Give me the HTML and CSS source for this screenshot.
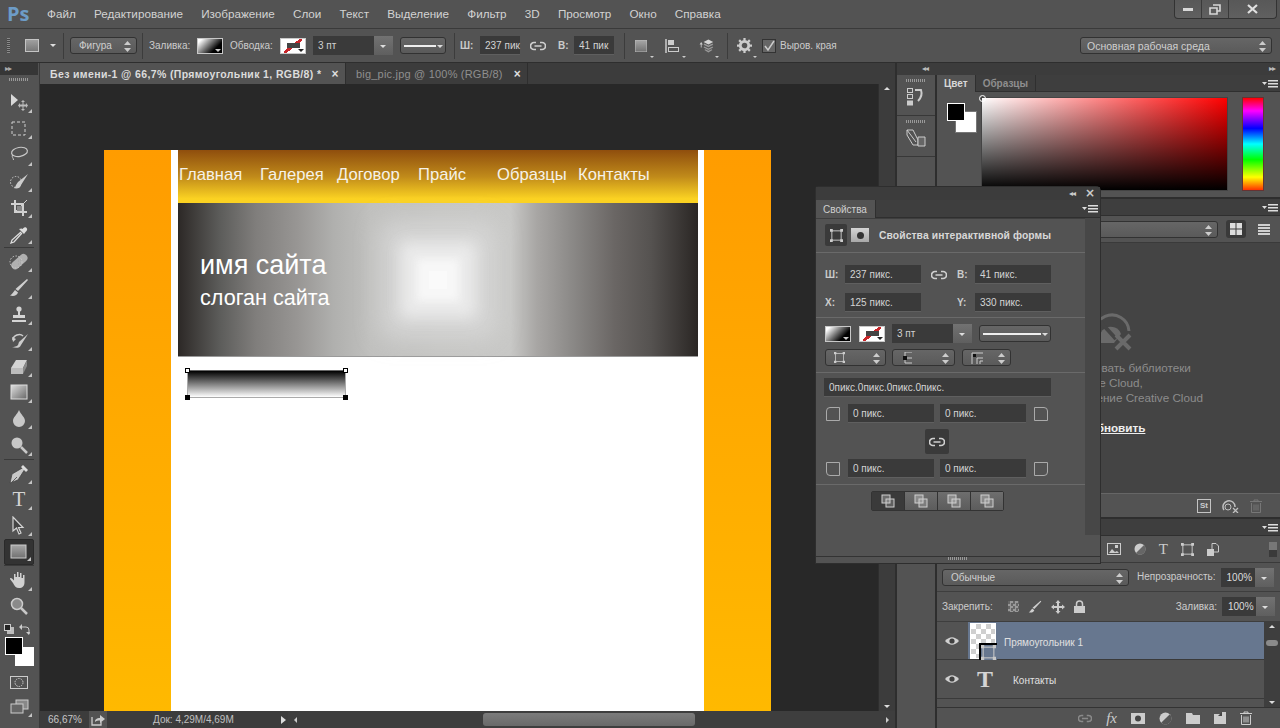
FILE: index.html
```html
<!DOCTYPE html>
<html lang="ru">
<head>
    <meta charset="UTF-8">
    <title>Photoshop</title>
    <link rel="stylesheet" href="styles.css">
</head>
<body>

<svg class="defs" width="0" height="0">
    <defs>
        <linearGradient id="g-tool" x1="0" y1="0" x2="1" y2="1"><stop offset="0" stop-color="#e0e0e0"/><stop offset="1" stop-color="#666"/></linearGradient>
        <linearGradient id="g-shape" x1="0" y1="0" x2="0" y2="1"><stop offset="0" stop-color="#a8a8a8"/><stop offset="1" stop-color="#707070"/></linearGradient>
        <symbol id="i-link" viewBox="0 0 16 10"><path d="M6 1.500H4a3.500 3.500 0 0 0 0 7h2M10 1.500h2a3.500 3.500 0 0 1 0 7h-2M4.500 5h7" fill="none" stroke="currentColor" stroke-width="1.700"/></symbol>
        <symbol id="i-updown" viewBox="0 0 7 11"><path d="M3.500 0 7 4H0zM3.500 11 0 7h7z" fill="currentColor"/></symbol>
        <symbol id="i-shape-path" viewBox="0 0 14 14"><rect x="2" y="2" width="10" height="10" fill="none" stroke="currentColor"/><path d="M0 0h3v3H0zM11 0h3v3h-3zM0 11h3v3H0zM11 11h3v3h-3z" fill="currentColor"/></symbol>
        <symbol id="i-ops" viewBox="0 0 14 14"><rect x="1" y="1" width="8" height="8" fill="currentColor" fill-opacity=".35" stroke="currentColor"/><rect x="5" y="5" width="8" height="8" fill="currentColor" fill-opacity=".25" stroke="currentColor"/></symbol>
        <symbol id="i-eye" viewBox="0 0 14 10"><path d="M0 5q7-7.500 14 0q-7 7.500-14 0z" fill="#d0d0d0"/><circle cx="7" cy="5" r="2.600" fill="#404040"/></symbol>
        <symbol id="i-menu" viewBox="0 0 16 8"><path d="M0 2h5L2.500 5z" fill="currentColor"/><path d="M6 0h10v1.500H6zM6 3h10v1.500H6zM6 6h10v1.500H6z" fill="currentColor"/></symbol>
        <symbol id="i-trash" viewBox="0 0 12 14"><path d="M0 2.500h12M4 2.500V1h4v1.500M1.500 4v9.500h9V4M4 5.500v6M6 5.500v6M8 5.500v6" fill="none" stroke="currentColor"/></symbol>
        <symbol id="i-brush" viewBox="0 0 20 20"><path d="M18 1 19 2 9 13 6.500 11zM6 12l3 2.500c-1 3-4 4-8 3 2-1 3-3 5-5.500z" fill="currentColor"/></symbol>
    </defs>
</svg>

<div class="app">

    <!-- меню -->
    <div class="menubar">
        <span class="ps-logo">Ps</span>
        <nav class="menu">
            <span>Файл</span><span>Редактирование</span><span>Изображение</span><span>Слои</span><span>Текст</span><span>Выделение</span><span>Фильтр</span><span>3D</span><span>Просмотр</span><span>Окно</span><span>Справка</span>
        </nav>
        <div class="win-btns">
            <span class="win-btn"><svg width="10" height="3"><rect width="10" height="3" fill="#d8d8d8"/></svg></span>
            <span class="win-btn"><svg width="12" height="11" viewBox="0 0 12 11"><path d="M4 1h7v6H8M1 4h7v6H1z" fill="none" stroke="#d8d8d8" stroke-width="1.600"/></svg></span>
            <span class="win-btn win-close"><svg width="11" height="10" viewBox="0 0 11 10"><path d="M1 1l9 8M10 1l-9 8" stroke="#e0e0e0" stroke-width="2.200"/></svg></span>
        </div>
    </div>

    <!-- панель параметров -->
    <div class="optbar">
        <span class="opt-grip"></span>
        <span class="opt-shape"></span>
        <span class="caret opt-caret"></span>
        <span class="vsep ml7"></span>
        <span class="select ml6 w-figure">Фигура<svg class="updown"><use href="#i-updown"/></svg></span>
        <span class="vsep ml5"></span>
        <span class="opt-label ml6 w-40">Заливка:</span>
        <span class="swatch-grad ml8"></span>
        <span class="opt-label ml7 w-42">Обводка:</span>
        <span class="swatch-stroke ml8"></span>
        <span class="combo ml7 w-80"><span class="combo-val">3 пт</span><span class="combo-btn"></span></span>
        <span class="line-drop ml7 w-46"><i></i></span>
        <span class="vsep ml8"></span>
        <span class="opt-label strong ml5 w-12">Ш:</span>
        <span class="input ml8 w-40">237 пик</span>
        <svg class="link-ic ml10"><use href="#i-link"/></svg>
        <span class="opt-label strong ml12 w-9">В:</span>
        <span class="input ml7 w-40">41 пик</span>
        <span class="vsep ml10"></span>
        <span class="opt-ic ml8"><svg width="12" height="12"><rect width="12" height="12" fill="url(#g-shape)" stroke="#bbb"/></svg></span>
        <span class="opt-ic ml16"><svg width="16" height="16" viewBox="0 0 16 16"><path d="M1 1v14" stroke="#ccc" stroke-width="1.500"/><rect x="3" y="2" width="6" height="5" fill="#ccc"/><rect x="3.500" y="9.500" width="10" height="4" fill="none" stroke="#ccc"/></svg></span>
        <span class="opt-ic ml17"><svg width="20" height="16" viewBox="0 0 20 16"><path d="M4 3 2 6h1.500v4h1V6H6z" fill="#ccc"/><path d="M13 0l6 3-6 3-6-3z" fill="#d4d4d4"/><path d="M8 5l5 2.500L18 5l1 1.500-6 3-6-3zM8 8.500l5 2.500 5-2.500 1 1.500-6 3-6-3zM9 12l4 2 4-2 1 1-5 3-5-3z" fill="#999"/></svg></span>
        <span class="vsep ml13"></span>
        <span class="opt-ic ml8"><svg width="15" height="15" viewBox="0 0 16 16"><circle cx="8" cy="8" r="4.500" fill="none" stroke="#ccc" stroke-width="3"/><path d="M8 0v3M8 13v3M0 8h3M13 8h3M2.300 2.300l2 2M11.700 11.700l2 2M13.700 2.300l-2 2M4.300 11.700l-2 2" stroke="#ccc" stroke-width="2.400"/></svg></span>
        <span class="checkbox ml10"><svg width="12" height="12" viewBox="0 0 12 12"><path d="M2 6l3 4 6-9" fill="none" stroke="#ccc" stroke-width="1.500"/></svg></span>
        <span class="opt-label ml4">Выров. края</span>
        <span class="select workspace-sel">Основная рабочая среда<svg class="updown"><use href="#i-updown"/></svg></span>
    </div>

    <div class="main">

        <!-- инструменты -->
        <aside class="toolbar">
            <div class="tb-head">&#9656;&#9656;</div>
            <div class="tb-grip"></div>
            <div class="tool more"><svg viewBox="0 0 20 20"><path d="M2 1v12l7-6z" fill="#d8d8d8"/><path d="M14 7l2 2h-1.500v2.500H17V10l2 2.500L17 15v-1.500h-2.500V16H16l-2 2-2-2h1.500v-2.500H11V15l-2-2.500 2-2.500v1.500h2.500V9H12z" fill="#bbb"/></svg></div>
            <div class="tool more"><svg viewBox="0 0 20 20"><rect x="3" y="3" width="13" height="13" fill="none" stroke="#d0d0d0" stroke-dasharray="3 2"/></svg></div>
            <div class="tool more"><svg viewBox="0 0 20 20"><ellipse cx="10.500" cy="7" rx="8" ry="4.500" fill="none" stroke="#c8c8c8" stroke-width="1.200" transform="rotate(-10 10 7)"/><path d="M3.500 10c-1 2 1 3 1 5" fill="none" stroke="#c8c8c8"/></svg></div>
            <div class="tool more"><svg viewBox="0 0 20 20"><circle cx="7" cy="10" r="5.500" fill="none" stroke="#ccc" stroke-dasharray="1.500 1.500"/><path d="M19 2 9 10l-2 3c-.5 2-1.500 3-2.500 3 3 1 7 .5 7.500-3z" fill="#ccc"/></svg></div>
            <div class="tool more"><svg viewBox="0 0 20 20"><path d="M6 2v12h12M2 6h12v12" fill="none" stroke="#d0d0d0" stroke-width="2"/><path d="M7 13 18 2" stroke="#d0d0d0"/><rect x="8" y="8" width="5" height="5" fill="#888"/></svg></div>
            <div class="tool more"><svg viewBox="0 0 20 20"><path d="M12 8 3 16l-1 3 3-1 8-9" fill="none" stroke="#ddd" stroke-width="1.300"/><path d="M10 5l5 5 1.500-2 1-1c2-2-1-5-3-3l-1 1-1-.500z" fill="#ddd"/></svg></div>
            <div class="tb-sep"></div>
            <div class="tool more"><svg viewBox="0 0 20 20"><rect x="1" y="6" width="19" height="8" rx="4" fill="#b0b0b0" transform="rotate(-42 10 10)"/><circle cx="7" cy="10" r="6" fill="none" stroke="#ccc" stroke-dasharray="1.500 1.500"/><path d="M9 9h.1M11 11h.1M11 8h.1M9 12h.1" stroke="#555" stroke-width="1.500"/></svg></div>
            <div class="tool more"><svg class="brush-ic"><use href="#i-brush"/></svg></div>
            <div class="tool more"><svg viewBox="0 0 20 20"><circle cx="10" cy="4" r="2.600" fill="#d4d4d4"/><path d="M9 6h2v4h5v3H4v-3h5zM3 15h14v2H3z" fill="#d4d4d4"/></svg></div>
            <div class="tool more"><svg viewBox="0 0 20 20"><path d="M4 9c0-5 7-7 10-4" fill="none" stroke="#ccc" stroke-width="1.500"/><path d="M3 6l1 5 3-3zM19 3 10 11l-1 3c-1 1.500-4 2-6 2 4 1.500 8 1 9-2z" fill="#ccc"/></svg></div>
            <div class="tool more"><svg viewBox="0 0 20 20"><path d="M7 3h11l-4 8H2z" fill="#d4d4d4"/><path d="M2 11h12v6H2z" fill="#bbb"/><path d="M14 11l4-8v6l-4 8z" fill="#888"/></svg></div>
            <div class="tool more"><svg viewBox="0 0 20 20"><rect x="2" y="2" width="16" height="14" fill="url(#g-tool)" stroke="#ddd"/></svg></div>
            <div class="tool more"><svg viewBox="0 0 20 20"><path d="M10 1c2 5 6 7 6 11a6 6 0 0 1-12 0c0-4 4-6 6-11z" fill="#c8c8c8"/></svg></div>
            <div class="tool more"><svg viewBox="0 0 20 20"><circle cx="8" cy="7" r="5.500" fill="#c8c8c8"/><path d="M12 11l6 6" stroke="#c8c8c8" stroke-width="2.500"/></svg></div>
            <div class="tb-sep"></div>
            <div class="tool more"><svg viewBox="0 0 20 20"><path d="M15 3 3 10 1 19l8-3 7-11zM3 18l5-5" fill="#c8c8c8" stroke="#444" stroke-width=".8"/><path d="M14 1l5 5-2 2-5-5z" fill="#ddd"/></svg></div>
            <div class="tool more tool-type">T</div>
            <div class="tool more"><svg viewBox="0 0 20 20"><path d="M4 1v14l3.500-3 2.500 6 2-1-2.500-5.500H14z" fill="#444" stroke="#d4d4d4" stroke-width="1.200"/></svg></div>
            <div class="tool more active"><svg viewBox="0 0 20 20"><rect x="2" y="3" width="15" height="13" fill="url(#g-shape)" stroke="#ccc"/></svg></div>
            <div class="tb-sep"></div>
            <div class="tool more"><svg viewBox="0 0 20 20"><path d="M5 7V4h1.500v3H8V2h1.500v5H11V3h1.500v5H14V5h1.500v7c0 4-2 6-5.500 6-3 0-4.500-2-6-5L1 9c0-1 1-1.500 2-.5L5 10.500z" fill="#d0d0d0"/></svg></div>
            <div class="tool"><svg viewBox="0 0 20 20"><circle cx="8" cy="7" r="5.500" fill="#8a8a8a" stroke="#ccc" stroke-width="1.500"/><path d="M12 11l6 6" stroke="#c8c8c8" stroke-width="2.500"/></svg></div>
            <div class="tb-colors">
                <div class="mini-row">
                    <svg width="10" height="10" viewBox="0 0 10 10"><rect x="3" y="3" width="7" height="7" fill="#bbb"/><rect x=".5" y=".5" width="6" height="6" fill="#222" stroke="#ccc"/></svg>
                    <svg width="11" height="11" viewBox="0 0 11 11"><path d="M1 3h6a3 3 0 0 1 3 3v4" fill="none" stroke="#ccc"/><path d="M3 0 0 3l3 3zM7 8l3 3 1-3z" fill="#ccc"/></svg>
                </div>
                <div class="fgbg"><span class="bg-col"></span><span class="fg-col"></span></div>
            </div>
            <div class="tool-mask"><svg width="18" height="13" viewBox="0 0 18 13"><rect x=".5" y=".5" width="17" height="12" fill="none" stroke="#ccc"/><circle cx="9" cy="6.500" r="4" fill="none" stroke="#ccc" stroke-dasharray="1.500 1"/></svg></div>
            <div class="tool more"><svg viewBox="0 0 20 20"><rect x="7" y="3" width="12" height="9" fill="#888" stroke="#ccc"/><rect x="2" y="7" width="12" height="9" fill="#666" stroke="#ccc"/></svg></div>
        </aside>

        <!-- документ -->
        <section class="docarea">
            <div class="doc-tabs">
                <span class="doc-tab active">Без имени-1 @ 66,7% (Прямоугольник 1, RGB/8) *<b>&#215;</b></span>
                <span class="doc-tab">big_pic.jpg @ 100% (RGB/8)<b>&#215;</b></span>
            </div>
            <div class="doc-view">
                <div class="canvas-scroll">
                    <div class="doc">
                        <div class="page">
                            <div class="site-nav">
                                <span>Главная</span><span>Галерея</span><span>Договор</span><span>Прайс</span><span>Образцы</span><span>Контакты</span>
                            </div>
                            <div class="site-hero">
                                <div class="site-name">имя сайта</div>
                                <div class="site-slogan">слоган сайта</div>
                            </div>
                            <div class="sel-rect">
                                <i class="hd hd-tl"></i><i class="hd hd-tr"></i><i class="hd hd-bl"></i><i class="hd hd-br"></i>
                            </div>
                        </div>
                    </div>
                </div>
                <div class="v-scroll"><span class="tri-up"></span><span class="tri-down"></span></div>
            </div>
            <div class="statusbar">
                <span class="zoom-val">66,67%</span>
                <span class="export-btn"><svg width="14" height="12" viewBox="0 0 14 12"><path d="M1 3v8h9V8" fill="none" stroke="#ccc" stroke-width="1.300"/><path d="M4 8c0-3 2-4 5-4V1l5 4-5 4V6.500c-2 0-4 0-5 1.500z" fill="#ccc"/></svg></span>
                <span class="doc-size">Док: 4,29M/4,69M</span>
                <span class="tri-right"></span>
                <div class="h-scroll"><span class="tri-l"></span><span class="h-thumb"></span><span class="tri-r"></span></div>
            </div>
        </section>

        <!-- правый док -->
        <div class="dock">
            <div class="dock-top"><span>&#9666;&#9666;</span><span>&#9656;&#9656;</span></div>
            <div class="dock-body">
                <div class="dock-icons">
                    <div class="dock-btn">
                        <i class="tb-grip short"></i>
                        <svg width="18" height="18" viewBox="0 0 18 18"><rect x=".5" y=".5" width="5" height="4" fill="none" stroke="#ccc"/><rect x=".5" y="6.500" width="5" height="4" fill="none" stroke="#ccc"/><rect y="12.500" width="6" height="5" fill="#ccc"/><path d="M8 2h6c1 3 1 7-3 11" fill="none" stroke="#ccc" stroke-width="2"/></svg>
                    </div>
                    <div class="dock-btn">
                        <i class="tb-grip short"></i>
                        <svg width="20" height="18" viewBox="0 0 20 18"><path d="M1 6V1h6l5 10v5H7zM1 1l9 12" fill="none" stroke="#ccc"/><path d="M12 8h7v9h-7z" fill="#666" stroke="#ccc"/></svg>
                    </div>
                </div>
                <div class="panels">

                    <div class="panel panel-color">
                        <div class="tabs"><span class="tab active">Цвет</span><span class="tab">Образцы</span><svg class="panel-menu"><use href="#i-menu"/></svg></div>
                        <div class="color-body">
                            <div class="color-swatches"><span class="bg-col"></span><span class="fg-col"></span></div>
                            <div class="color-field"><i></i></div>
                            <div class="hue"></div>
                        </div>
                    </div>

                    <div class="panel panel-lib">
                        <div class="tabs"><span class="tab active lib-tab">Библиотеки</span><span class="tab">Стили</span><svg class="panel-menu"><use href="#i-menu"/></svg></div>
                        <div class="lib-head">
                            <span class="select lib-select"><svg class="updown"><use href="#i-updown"/></svg></span>
                            <span class="view-btn active"><svg width="12" height="12" viewBox="0 0 12 12"><path d="M0 0h5.500v5.500H0zM6.500 0H12v5.500H6.500zM0 6.500h5.500V12H0zM6.500 6.500H12V12H6.500z" fill="#ddd"/></svg></span>
                            <span class="view-btn"><svg width="12" height="11" viewBox="0 0 12 11"><path d="M0 0h12v2H0zM0 3h12v2H0zM0 6h12v2H0zM0 9h12v2H0z" fill="#d0d0d0"/></svg></span>
                        </div>
                        <div class="lib-body">
                            <svg class="cloud-off" width="46" height="40" viewBox="0 0 46 40"><path d="M12 32A17 17 0 1 1 41 19" fill="none" stroke="#6a6a6a" stroke-width="3"/><path d="M13 31a11 11 0 1 1 20-9l-7 9z" fill="#6a6a6a"/><path d="M8 5 28 27" stroke="#444" stroke-width="4"/><path d="M28 23l14 14M42 23 28 37" stroke="#6a6a6a" stroke-width="4"/></svg>
                            <p>Чтобы активировать библиотеки<br>Creative Cloud,<br>обновите приложение Creative Cloud</p>
                            <p class="lib-link"><u>Обновить</u></p>
                        </div>
                        <div class="lib-foot">
                            <span class="st-box">St</span>
                            <svg width="17" height="14" viewBox="0 0 17 14"><path d="M2 11a6 6 0 1 1 11-3" fill="none" stroke="#c0c0c0" stroke-width="1.500"/><circle cx="6" cy="8" r="3" fill="none" stroke="#c0c0c0"/><path d="M11 9l5 5M16 9l-5 5" stroke="#c0c0c0" stroke-width="1.300"/></svg>
                            <svg class="trash-dim"><use href="#i-trash"/></svg>
                            <span class="resize-grip"></span>
                        </div>
                    </div>

                    <div class="panel panel-layers">
                        <div class="tabs"><span class="tab active">Слои</span><span class="tab">Каналы</span><svg class="panel-menu"><use href="#i-menu"/></svg></div>
                        <div class="layer-filter">
                            <svg width="14" height="12" viewBox="0 0 14 12"><rect x=".5" y=".5" width="13" height="11" fill="none" stroke="#ccc"/><path d="M2 10l3-4 3 3 2-1 2 2z" fill="#ccc"/><rect x="8" y="2" width="3" height="3" fill="#ccc"/></svg>
                            <svg width="12" height="12" viewBox="0 0 12 12"><circle cx="6" cy="6" r="5.500" fill="#ccc"/><path d="M10 2A5.500 5.500 0 0 1 2 10z" fill="#666"/></svg>
                            <span class="filter-t">T</span>
                            <svg width="13" height="13"><use href="#i-shape-path" color="#ccc"/></svg>
                            <svg width="12" height="13" viewBox="0 0 12 13"><path d="M5 .5h4l2.500 2.500v6H5z" fill="none" stroke="#ccc"/><rect y="6" width="7" height="7" fill="#ccc"/></svg>
                            <span class="filter-toggle"></span>
                        </div>
                        <div class="layer-row-blend">
                            <span class="select blend-sel">Обычные<svg class="updown"><use href="#i-updown"/></svg></span>
                            <span class="opt-label opacity-label">Непрозрачность:</span>
                            <span class="combo pct"><span class="combo-val">100%</span><span class="combo-btn"></span></span>
                        </div>
                        <div class="layer-row-lock">
                            <span class="opt-label">Закрепить:</span>
                            <span class="lock-ic checker-ic"></span>
                            <svg class="lock-ic2 brush-ic"><use href="#i-brush"/></svg>
                            <svg class="lock-ic3" width="14" height="14" viewBox="0 0 14 14"><path d="M7 0l2.500 3H8v3h3V4.500L14 7l-3 2.500V8H8v3h1.500L7 14l-2.500-3H6V8H3v1.500L0 7l3-2.500V6h3V3H4.500z" fill="#ccc"/></svg>
                            <svg class="lock-ic3" width="11" height="13" viewBox="0 0 11 13"><path d="M2.500 6V4a3 3 0 0 1 6 0v2" fill="none" stroke="#ccc" stroke-width="1.500"/><rect y="6" width="11" height="7" fill="#ccc"/></svg>
                            <span class="opt-label fill-label">Заливка:</span>
                            <span class="combo pct"><span class="combo-val">100%</span><span class="combo-btn"></span></span>
                        </div>
                        <div class="layer-list">
                            <div class="layer-rows">
                                <div class="layer selected">
                                    <span class="eye"><svg width="14" height="10"><use href="#i-eye"/></svg></span>
                                    <span class="thumb">
                                        <svg class="thumb-path" width="15" height="15"><use href="#i-shape-path" color="#c8c8c8"/></svg>
                                    </span>
                                    <span class="layer-name">Прямоугольник 1</span>
                                </div>
                                <div class="layer">
                                    <span class="eye"><svg width="14" height="10"><use href="#i-eye"/></svg></span>
                                    <span class="type-thumb">T</span>
                                    <span class="layer-name">Контакты</span>
                                </div>
                                <div class="layer layer-cut"></div>
                            </div>
                            <div class="layer-scroll"><span class="tri-up"></span><span class="layer-thumb"></span><span class="tri-down"></span></div>
                        </div>
                        <div class="layer-foot">
                            <svg class="foot-link"><use href="#i-link"/></svg>
                            <span class="fx">fx</span>
                            <svg width="14" height="11" viewBox="0 0 14 11"><rect width="14" height="11" fill="#ccc"/><circle cx="7" cy="5.500" r="3" fill="#444"/></svg>
                            <svg width="13" height="13" viewBox="0 0 12 12"><circle cx="6" cy="6" r="5.500" fill="#ccc"/><path d="M10 2A5.500 5.500 0 0 1 2 10z" fill="#555"/></svg>
                            <svg width="14" height="11" viewBox="0 0 14 11"><path d="M0 0h6l1 2h7v9H0z" fill="#ccc"/></svg>
                            <svg width="12" height="12" viewBox="0 0 12 12"><path d="M0 2h8V0h4v12H0z" fill="#ccc"/><path d="M8 0v4H4z" fill="#444"/></svg>
                            <svg class="trash-ic"><use href="#i-trash"/></svg>
                        </div>
                    </div>

                </div>
            </div>
        </div>
    </div>

    <!-- плавающая панель свойств -->
    <div class="float-panel">
        <div class="float-head"><span>&#9666;&#9666;</span><b>&#215;</b></div>
        <div class="tabs"><span class="tab active prop-tab">Свойства</span><svg class="panel-menu"><use href="#i-menu"/></svg></div>
        <div class="float-main">
            <div class="float-content">
                <div class="prop-title">
                    <span class="prop-mode active"><svg width="13" height="13"><use href="#i-shape-path" color="#ccc"/></svg></span>
                    <span class="prop-mask"><i></i></span>
                    <b>Свойства интерактивной формы</b>
                </div>
                <div class="prop-size">
                    <span class="opt-label strong">Ш:</span><span class="input">237 пикс.</span>
                    <svg class="link-ic center"><use href="#i-link"/></svg>
                    <span class="opt-label strong">В:</span><span class="input">41 пикс.</span>
                    <span class="opt-label strong">X:</span><span class="input">125 пикс.</span>
                    <span></span>
                    <span class="opt-label strong">Y:</span><span class="input">330 пикс.</span>
                </div>
                <div class="prop-style">
                    <div class="style-row">
                        <span class="swatch-grad"></span>
                        <span class="swatch-stroke ml8"></span>
                        <span class="combo ml7 w-80"><span class="combo-val">3 пт</span><span class="combo-btn"></span></span>
                        <span class="line-drop ml7 w-72"><i></i></span>
                    </div>
                    <div class="style-row second">
                        <span class="select w-61"><svg class="mini-ic" width="11" height="11"><use href="#i-shape-path" color="#ccc"/></svg><svg class="updown"><use href="#i-updown"/></svg></span>
                        <span class="select w-63 ml6"><svg class="mini-ic ic-indent" width="10" height="12" viewBox="0 0 10 12"><path d="M2 0h7M2 6h7M2 11h7M2 0v11" fill="none" stroke="#ccc"/><rect y="4" width="4" height="4" fill="#111"/></svg><svg class="updown"><use href="#i-updown"/></svg></span>
                        <span class="select w-49 ml7"><svg class="mini-ic" width="12" height="12" viewBox="0 0 12 12"><path d="M1 12V1h11M6 12V6h6M9 12V9h3" fill="none" stroke="#ccc"/><rect x="2" y="2" width="3" height="3" fill="#111"/></svg><svg class="updown"><use href="#i-updown"/></svg></span>
                    </div>
                </div>
                <div class="prop-corners">
                    <span class="input all-corners">0пикс.0пикс.0пикс.0пикс.</span>
                    <div class="corner-row">
                        <span class="corner tl"></span><span class="input">0 пикс.</span><span class="input">0 пикс.</span><span class="corner tr"></span>
                    </div>
                    <span class="corner-link"><svg class="link-ic"><use href="#i-link"/></svg></span>
                    <div class="corner-row">
                        <span class="corner bl"></span><span class="input">0 пикс.</span><span class="input">0 пикс.</span><span class="corner br"></span>
                    </div>
                </div>
                <div class="prop-ops">
                    <span class="op active"><svg width="14" height="14"><use href="#i-ops"/></svg></span>
                    <span class="op"><svg width="14" height="14"><use href="#i-ops"/></svg></span>
                    <span class="op"><svg width="14" height="14"><use href="#i-ops"/></svg></span>
                    <span class="op"><svg width="14" height="14"><use href="#i-ops"/></svg></span>
                </div>
            </div>
            <div class="float-scroll"></div>
        </div>
        <div class="float-foot"><i class="tb-grip short"></i><span class="resize-grip"></span></div>
    </div>

</div>

</body>
</html>
```

FILE: styles.css
```css
* {
    box-sizing: border-box;
}

html, body {
    margin: 0;
    padding: 0;
    background: #535353;
}

body {
    font-family: "Liberation Sans", "DejaVu Sans", sans-serif;
    font-size: 11px;
    color: #cfcfcf;
}

.defs {
    position: absolute;
}

.app {
    position: relative;
    width: 1280px;
    height: 728px;
    overflow: hidden;
    display: flex;
    flex-direction: column;
    background: #535353;
}

/* меню */
.menubar {
    height: 29px;
    flex: none;
    display: flex;
    align-items: flex-start;
    border-bottom: 1px solid #3a3a3a;
}

.ps-logo {
    width: 47px;
    padding: 4px 0 0 7px;
    font-family: "Open Sans", sans-serif;
    font-size: 20px;
    line-height: 20px;
    font-weight: 700;
    color: #6d9cc7;
}

.menu {
    display: flex;
    gap: 18.200px;
    padding-top: 7px;
    font-size: 11.700px;
    line-height: 14px;
    color: #d2d2d2;
}

.win-btns {
    margin-left: auto;
    margin-right: 3px;
    display: flex;
    height: 19px;
    border: 1px solid #333;
    border-top: 0;
    border-radius: 0 0 4px 4px;
    background: linear-gradient(#585858, #606060);
}

.win-btn {
    width: 27px;
    display: flex;
    align-items: center;
    justify-content: center;
    border-right: 1px solid #3a3a3a;
}

.win-close {
    width: 47px;
    border-right: 0;
}

/* панель параметров */
.optbar {
    height: 34px;
    flex: none;
    display: flex;
    align-items: center;
    border-bottom: 1px solid #2e2e2e;
}

.optbar > * {
    flex: none;
}

.ml4 { margin-left: 4px; }
.ml5 { margin-left: 5px; }
.ml6 { margin-left: 6px; }
.ml7 { margin-left: 7px; }
.ml8 { margin-left: 8px; }
.ml10 { margin-left: 10px; }
.ml12 { margin-left: 12px; }
.ml13 { margin-left: 13px; }
.ml16 { margin-left: 16px; }
.ml17 { margin-left: 17px; }
.w-9 { width: 9px; }
.w-12 { width: 12px; }
.w-40 { width: 40px; }
.w-42 { width: 42px; }
.w-46 { width: 46px; }
.w-49 { width: 49px; }
.w-61 { width: 61px; }
.w-63 { width: 63px; }
.w-72 { width: 72px; }
.w-80 { width: 80px; }
.w-figure { width: 67px; }

.opt-grip {
    width: 3px;
    height: 15px;
    margin-left: 7px;
    background: repeating-linear-gradient(#8a8a8a 0 1px, #444 1px 2px);
}

.opt-shape {
    width: 14px;
    height: 13px;
    margin-left: 15px;
    background: linear-gradient(#a0a0a0, #777);
    border: 1px solid #c4c4c4;
}

.caret {
    width: 0;
    height: 0;
    border: 3px solid transparent;
    border-top: 3px solid #ddd;
    border-bottom: 0;
}

.opt-caret {
    margin-left: 11px;
}

.vsep {
    width: 1px;
    height: 26px;
    background: #3c3c3c;
}

.select {
    position: relative;
    display: flex;
    align-items: center;
    height: 17px;
    padding-left: 8px;
    font-size: 10px;
    color: #cfcfcf;
    border: 1px solid #323232;
    border-radius: 3px;
    background: linear-gradient(#666, #5a5a5a);
}

.updown {
    position: absolute;
    right: 5px;
    top: 3px;
    width: 7px;
    height: 11px;
    color: #ccc;
}

.opt-label {
    font-size: 10px;
    line-height: 12px;
    color: #cccccc;
    white-space: nowrap;
}

.strong {
    font-weight: 700;
}

.swatch-grad {
    position: relative;
    width: 26px;
    height: 16px;
    flex: none;
    background: linear-gradient(135deg, #fff 10%, #000 72%);
    border: 1px solid #c8c8c8;
}

.swatch-grad::after,
.swatch-stroke::after {
    content: "";
    position: absolute;
    right: 1px;
    bottom: 1px;
    width: 0;
    border: 3px solid transparent;
    border-top: 3px solid #222;
    border-bottom: 0;
}

.swatch-grad::after {
    border-top-color: #ccc;
}

.swatch-stroke {
    position: relative;
    width: 26px;
    height: 16px;
    flex: none;
    border: 1px solid #c8c8c8;
    background:
        linear-gradient(#444, #444) 50% 45% / 13px 5px no-repeat,
        linear-gradient(to bottom right, transparent 43%, #c8262a 43% 57%, transparent 57%) 50% 50% / 18px 14px no-repeat,
        #fff;
}

.combo {
    display: flex;
    flex: none;
    height: 19px;
    border-radius: 2px;
}

.combo-val {
    flex: 1;
    padding-left: 5px;
    font-size: 10px;
    line-height: 19px;
    background: #3a3a3a;
    color: #d0d0d0;
}

.combo-btn {
    position: relative;
    width: 19px;
    flex: none;
    background: linear-gradient(#727272, #5f5f5f);
}

.combo-btn::after {
    content: "";
    position: absolute;
    left: 6px;
    top: 9px;
    border: 3px solid transparent;
    border-top: 3px solid #ddd;
    border-bottom: 0;
}

.line-drop {
    position: relative;
    flex: none;
    display: block;
    height: 17px;
    border: 1px solid #323232;
    border-radius: 3px;
    background: linear-gradient(#666, #5a5a5a);
}

.line-drop i {
    position: absolute;
    left: 3px;
    right: 9px;
    top: 7px;
    height: 2px;
    background: #eee;
}

.line-drop::after {
    content: "";
    position: absolute;
    right: 2px;
    top: 7px;
    border: 3px solid transparent;
    border-top: 3px solid #ddd;
    border-bottom: 0;
}

.input {
    display: block;
    height: 19px;
    padding-left: 5px;
    white-space: nowrap;
    font-size: 10px;
    line-height: 19px;
    color: #d4d4d4;
    background: #3a3a3a;
    border-bottom: 1px solid #5f5f5f;
}

.link-ic {
    width: 16px;
    height: 10px;
    color: #d0d0d0;
}

.link-ic.center {
    justify-self: center;
    align-self: center;
}

.opt-ic {
    position: relative;
    width: 16px;
    height: 18px;
    display: flex;
    align-items: center;
    justify-content: center;
}

.opt-ic::after {
    content: "";
    position: absolute;
    right: -5px;
    bottom: -3px;
    border: 2px solid transparent;
    border-top: 2px solid #ccc;
    border-bottom: 0;
}

.checkbox {
    width: 14px;
    height: 14px;
    display: flex;
    align-items: center;
    justify-content: center;
    background: #666;
    border: 1px solid #333;
}

.workspace-sel {
    width: 192px;
    margin-left: auto;
    margin-right: 8px;
    padding-left: 6px;
    font-size: 10.500px;
}

/* основная область */
.main {
    flex: 1;
    min-height: 0;
    display: flex;
}

.toolbar {
    width: 40px;
    flex: none;
    padding-right: 1px;
    border-right: 1px solid #3a3a3a;
    background: #535353;
    display: flex;
    flex-direction: column;
}

.tb-head {
    height: 12px;
    padding-left: 5px;
    font-family: "DejaVu Sans", sans-serif;
    font-size: 8px;
    line-height: 11px;
    background: #363636;
    color: #aaa;
    letter-spacing: -1px;
}

.tb-grip {
    display: block;
    height: 3px;
    width: 20px;
    margin: 3px auto 9px;
    background: repeating-linear-gradient(90deg, #999 0 1px, transparent 1px 2px);
}

.tb-grip.short {
    margin: 0 auto;
    flex: none;
}

.tool {
    position: relative;
    height: 26.200px;
    flex: none;
    display: flex;
    align-items: center;
    justify-content: center;
}

.tool svg {
    width: 20px;
    height: 20px;
    color: #cfcfcf;
}

.tool.more::after {
    content: "";
    position: absolute;
    right: 6px;
    bottom: 3px;
    border-style: solid;
    border-width: 0 0 4px 4px;
    border-color: transparent transparent #c4c4c4 transparent;
}

.tool.active {
    margin: 0 4px;
    background: #333;
    border: 1px solid #2a2a2a;
    border-radius: 2px;
}

.tool.active.more::after {
    right: 2px;
}

.tool-type {
    font-family: "Liberation Serif", serif;
    font-size: 21px;
    color: #d4d4d4;
}

.tb-sep {
    height: 2px;
    flex: none;
    margin: 0 4px;
    border-top: 1px solid #3a3a3a;
}

.tb-colors {
    flex: none;
}

.mini-row {
    display: flex;
    justify-content: space-between;
    padding: 4px 8px 0 4px;
}

.fgbg {
    position: relative;
    height: 34px;
    margin-top: 2px;
}

.fg-col,
.bg-col {
    position: absolute;
    display: block;
}

.fgbg .fg-col {
    left: 5px;
    top: 0;
    width: 18px;
    height: 18px;
    background: #000;
    border: 1px solid #fff;
}

.fgbg .bg-col {
    left: 15px;
    top: 10px;
    width: 19px;
    height: 19px;
    background: #fff;
}

.tool-mask {
    height: 22px;
    flex: none;
    margin-top: 1px;
    display: flex;
    align-items: center;
    justify-content: center;
}

/* документ */
.docarea {
    width: 855px;
    flex: none;
    display: flex;
    flex-direction: column;
    background: #282828;
}

.doc-tabs {
    height: 21px;
    flex: none;
    display: flex;
    background: #3c3c3c;
}

.doc-tab {
    display: flex;
    align-items: center;
    justify-content: space-between;
    padding: 0 6px 0 10px;
    font-size: 10.500px;
    letter-spacing: .37px;
    color: #8f8f8f;
    border-right: 1px solid #2e2e2e;
    white-space: nowrap;
}

.doc-tab.active {
    width: 306px;
    background: #535353;
    color: #dcdcdc;
    font-weight: 700;
}

.doc-tab:not(.active) {
    width: 182px;
    font-weight: 400;
    font-size: 11px;
    letter-spacing: .2px;
}

.doc-tab b {
    font-size: 12px;
    color: #ddd;
}

.doc-view {
    flex: 1;
    min-height: 0;
    display: flex;
}

.canvas-scroll {
    flex: 1;
    padding: 66px 0 0 64px;
    overflow: hidden;
}

.doc {
    width: 667px;
    height: 100%;
    padding: 0 67px;
    background: linear-gradient(#ff9c00, #ffb900);
}

.page {
    position: relative;
    height: 100%;
    padding: 0 6px 0 7px;
    background: #fff;
}

.site-nav {
    height: 53px;
    padding: 14px 0 0 1px;
    display: grid;
    grid-template-columns: 81px 77px 81px 79px 81px auto;
    font-size: 16.600px;
    line-height: 22px;
    color: #f6f2e8;
    background: linear-gradient(#8f4e0d, #c08a1a 50%, #fbd222 92%);
}

.site-hero {
    position: relative;
    height: 154px;
    padding: 46px 0 0 22px;
    color: #fff;
    border-bottom: 1px solid #9a9a9a;
    background: linear-gradient(90deg, #2c2826, #5c5c5a 8%, #807e7c 15%, #989694 23%, #b0b0ae 30%, #c0c0be 37%, #c6c6c4 50%, #c8c8c6 64%, #a8a6a4 69%, #8a8886 76%, #6a6664 84%, #555250 91%, #2a2624);
}

/* светлый квадрат в центре шапки */
.site-hero::before {
    content: "";
    position: absolute;
    left: 251px;
    top: 68px;
    width: 18px;
    height: 18px;
    background: #fafafa;
    box-shadow:
        0 0 8px 12px rgba(248, 248, 248, .95),
        0 0 14px 28px rgba(238, 238, 238, .85),
        0 0 24px 48px rgba(222, 222, 222, .7);
}

.site-name {
    font-size: 27px;
    line-height: 32px;
}

.site-slogan {
    margin-top: 5px;
    font-size: 21.600px;
    line-height: 24px;
}

.sel-rect {
    position: relative;
    width: 159px;
    height: 28px;
    margin: 13px 0 0 9px;
    background: linear-gradient(#000, #fff);
    border: 1px solid #aaa;
    border-top-color: #666;
}

.hd {
    position: absolute;
    width: 5px;
    height: 5px;
    background: #000;
}

.hd-tl { left: -3px; top: -3px; background: #fff; border: 1px solid #000; }
.hd-tr { right: -3px; top: -3px; background: #fff; border: 1px solid #000; }
.hd-bl { left: -3px; bottom: -3px; }
.hd-br { right: -3px; bottom: -3px; }

.v-scroll {
    position: relative;
    width: 17px;
    flex: none;
    background: #3c3c3c;
    border-left: 1px solid #2e2e2e;
}

.tri-up,
.tri-down {
    position: absolute;
    left: 5px;
    border: 3px solid transparent;
}

.tri-up {
    top: 3px;
    border-bottom-color: #ddd;
    border-top: 0;
}

.tri-down {
    bottom: 3px;
    border-top-color: #ddd;
    border-bottom: 0;
}

.statusbar {
    height: 17px;
    flex: none;
    display: flex;
    align-items: center;
    background: #3c3c3c;
    font-size: 10px;
    color: #c8c8c8;
}

.zoom-val {
    width: 49px;
    padding-left: 8px;
}

.export-btn {
    width: 18px;
    height: 17px;
    display: flex;
    align-items: center;
    justify-content: center;
    background: #535353;
}

.doc-size {
    width: 163px;
    flex: none;
    padding-left: 46px;
    white-space: nowrap;
    color: #c0c0c0;
}

.tri-right {
    margin-left: 11px;
    border: 4px solid transparent;
    border-left: 5px solid #ddd;
    border-right: 0;
}

.h-scroll {
    position: relative;
    flex: 1;
    height: 17px;
    margin-left: 2px;
    display: flex;
    align-items: center;
    justify-content: space-between;
    padding: 0 6px;
    background: #3e3e3e;
}

.h-thumb {
    position: absolute;
    left: 195px;
    top: 2px;
    width: 212px;
    height: 13px;
    border-radius: 3px;
    background: linear-gradient(#7c7c7c, #696969);
}

.tri-l {
    border: 3px solid transparent;
    border-right-color: #ccc;
    border-left: 0;
}

.tri-r {
    border: 3px solid transparent;
    border-left-color: #ccc;
    border-right: 0;
}

/* правый док */
.dock {
    flex: 1;
    min-width: 0;
    display: flex;
    flex-direction: column;
    padding-left: 2px;
    background: #2e2e2e;
}

.dock-top {
    height: 12px;
    flex: none;
    display: flex;
    justify-content: space-between;
    padding: 0 5px 0 25px;
    font-family: "DejaVu Sans", sans-serif;
    font-size: 8px;
    line-height: 11px;
    letter-spacing: -1px;
    color: #bbb;
    background: #3c3c3c;
}

.dock-body {
    flex: 1;
    min-height: 0;
    display: flex;
    gap: 2px;
}

.dock-icons {
    width: 38px;
    flex: none;
    background: #535353;
}

.dock-btn {
    height: 41px;
    display: flex;
    flex-direction: column;
    align-items: center;
    gap: 6px;
    padding-top: 4px;
    border-bottom: 1px solid #383838;
}

.panels {
    flex: 1;
    min-width: 0;
    display: flex;
    flex-direction: column;
    gap: 2px;
}

.panel {
    flex: none;
    background: #535353;
    display: flex;
    flex-direction: column;
}

.tabs {
    position: relative;
    height: 17px;
    flex: none;
    display: flex;
    background: #3e3e3e;
    border-bottom: 1px solid #2f2f2f;
}

.tab {
    display: flex;
    align-items: center;
    padding: 0 7px;
    font-size: 10px;
    font-weight: 700;
    color: #8e8e8e;
    border-right: 1px solid #2f2f2f;
}

.tab.active {
    height: 17px;
    background: #535353;
    color: #d8d8d8;
}

.panel-menu {
    position: absolute;
    right: 2px;
    top: 5px;
    width: 16px;
    height: 8px;
    color: #ddd;
}

.panel-color {
    height: 122px;
}

.color-body {
    position: relative;
    flex: 1;
}

.color-swatches .fg-col {
    left: 10px;
    top: 11px;
    width: 18px;
    height: 18px;
    background: #000;
    border: 1px solid #fff;
    outline: 0;
}

.color-swatches .bg-col {
    left: 19px;
    top: 20px;
    width: 20px;
    height: 20px;
    background: #fff;
    outline: 1px solid #777;
}

.color-field {
    position: absolute;
    left: 45px;
    top: 6px;
    width: 245px;
    height: 92px;
    background:
        linear-gradient(to top, #000, rgba(0, 0, 0, 0)),
        linear-gradient(to right, #fff, #f00);
    outline: 1px solid #444;
}

.color-field i {
    position: absolute;
    left: -3px;
    top: -3px;
    width: 7px;
    height: 7px;
    border: 1px solid #fff;
    border-radius: 50%;
}

.hue {
    position: absolute;
    left: 306px;
    top: 6px;
    width: 20px;
    height: 92px;
    outline: 1px solid #663333;
    background: linear-gradient(#ff0000, #ff00ff 14%, #0000ff 33%, #00ffff 50%, #00ff00 67%, #ffff00 86%, #ff3300);
}

.panel-lib {
    height: 318px;
    position: relative;
}

.lib-tab {
    width: 90px;
}

.lib-head {
    height: 27px;
    flex: none;
    display: flex;
    align-items: center;
    gap: 8px;
    padding-left: 8px;
    border-bottom: 1px solid #3a3a3a;
}

.lib-select {
    width: 273px;
}

.view-btn {
    width: 20px;
    height: 18px;
    display: flex;
    align-items: center;
    justify-content: center;
}

.view-btn.active {
    background: #3a3a3a;
    border-radius: 3px;
}

.lib-body {
    position: relative;
    flex: 1;
    padding: 117px 12px 0 0;
    background: #444;
    font-size: 11.700px;
    line-height: 15px;
    color: #8c8c8c;
    text-align: center;
}

.lib-body p {
    margin: 0;
    white-space: nowrap;
}

.cloud-off {
    position: absolute;
    left: 151px;
    top: 69px;
}

.lib-body .lib-link {
    margin-top: 15px;
    padding-left: 28px;
    font-weight: 700;
    color: #eee;
}

.lib-foot {
    position: relative;
    height: 24px;
    flex: none;
    display: flex;
    align-items: center;
    gap: 11px;
    padding-left: 260px;
    border-top: 1px solid #666;
}

.st-box {
    width: 14px;
    height: 14px;
    border: 1px solid #c4c4c4;
    font-size: 8px;
    line-height: 12px;
    text-align: center;
    font-weight: 700;
    color: #ccc;
}

.trash-dim {
    width: 12px;
    height: 14px;
    color: #777;
}

.resize-grip {
    position: absolute;
    right: 1px;
    bottom: 1px;
    width: 10px;
    height: 10px;
    background: radial-gradient(circle, #1c1c1c 40%, transparent 45%) 0 0 / 2px 2px;
    clip-path: polygon(100% 0, 100% 100%, 0 100%);
}

.panel-layers {
    flex: 1;
    min-height: 0;
}

.layer-filter {
    height: 27px;
    flex: none;
    display: flex;
    align-items: center;
    justify-content: flex-end;
    gap: 13px;
    padding-right: 61px;
    position: relative;
    border-bottom: 1px solid #3a3a3a;
}

.filter-t {
    font-family: "Liberation Serif", serif;
    font-size: 15px;
    line-height: 15px;
    color: #ccc;
}

.filter-toggle {
    position: absolute;
    right: 3px;
    top: 6px;
    width: 8px;
    height: 15px;
    background: linear-gradient(#777 50%, #3a3a3a 50%);
}

.layer-row-blend,
.layer-row-lock {
    height: 29px;
    flex: none;
    display: flex;
    align-items: center;
    padding: 0 5px;
    border-bottom: 1px solid #3e3e3e;
}

.layer-row-lock {
    height: 30px;
}

.blend-sel {
    width: 187px;
    flex: none;
}

.opacity-label {
    margin-left: 8px;
    margin-right: 5px;
}

.pct {
    width: 53px;
}

.pct .combo-val {
    padding-left: 6px;
    color: #ddd;
}

.lock-ic {
    display: block;
    width: 11px;
    height: 11px;
    margin-left: 15px;
}

.checker-ic {
    background: repeating-conic-gradient(#999 0 25%, #666 0 50%) 0 0 / 5px 5px;
}

.lock-ic2 {
    width: 14px;
    height: 14px;
    margin-left: 9px;
    color: #999;
}

.lock-ic3 {
    margin-left: 9px;
}

.fill-label {
    margin-left: auto;
    margin-right: 5px;
}

.layer-list {
    height: 86px;
    flex: none;
    display: flex;
    border-bottom: 1px solid #333;
}

.layer-rows {
    flex: 1;
    min-width: 0;
}

.layer {
    height: 39px;
    display: flex;
    align-items: center;
    padding-left: 31px;
    position: relative;
    border-bottom: 1px solid #3a3a3a;
}

.layer.selected {
    height: 38px;
    border-bottom: 1px solid #3a3a3a;
    background: linear-gradient(90deg, #535353 31px, #67778f 31px);
}

.layer-cut {
    height: 8px;
    border-bottom: 0;
}

.eye {
    position: absolute;
    left: 8px;
    top: 14px;
    display: block;
    width: 14px;
    height: 10px;
}

.thumb {
    position: relative;
    width: 26px;
    height: 36px;
    margin-left: 2px;
    flex: none;
    background: repeating-conic-gradient(#cfcfcf 0 25%, #fff 0 50%) 0 0 / 10px 10px;
    border: 1px solid #fff;
}

.thumb::after {
    content: "";
    position: absolute;
    left: 8px;
    top: 19px;
    width: 16px;
    height: 15px;
    background: #67778f;
    border-left: 2px solid #000;
    border-top: 2px solid #000;
}

.thumb-path {
    position: absolute;
    left: 10px;
    top: 21px;
    z-index: 1;
}

.layer-name {
    margin-left: 8px;
    padding-top: 3px;
    font-size: 10px;
    color: #e0e0e0;
}

.layer:not(.selected) .layer-name {
    margin-left: 13px;
}

.type-thumb {
    width: 30px;
    margin-left: 2px;
    text-align: center;
    font-family: "Liberation Serif", serif;
    font-size: 24px;
    line-height: 24px;
    font-weight: 700;
    color: #d4d4d4;
}

.layer-scroll {
    position: relative;
    width: 16px;
    flex: none;
    background: #3e3e3e;
}

.layer-thumb {
    position: absolute;
    left: 2px;
    top: 18px;
    width: 12px;
    height: 6px;
    border-radius: 3px;
    background: #8a8a8a;
}

.layer-foot {
    flex: 1;
    display: flex;
    align-items: center;
    justify-content: flex-end;
    gap: 14px;
    padding-right: 28px;
    background: #535353;
}

.foot-link {
    width: 14px;
    height: 9px;
    color: #8a8a8a;
}

.fx {
    font-family: "Liberation Serif", serif;
    font-style: italic;
    font-size: 15px;
    line-height: 14px;
    color: #ccc;
}

.trash-ic {
    width: 12px;
    height: 14px;
    color: #ccc;
}

.brush-ic {
    color: #cfcfcf;
}

/* плавающая панель свойств */
.float-panel {
    position: absolute;
    left: 816px;
    top: 187px;
    width: 284px;
    height: 376px;
    display: flex;
    flex-direction: column;
    background: #535353;
    box-shadow: 0 0 0 1px #2e2e2e;
    border-radius: 2px 4px 0 0;
}

.float-head {
    height: 13px;
    flex: none;
    display: flex;
    justify-content: flex-end;
    gap: 10px;
    padding-right: 5px;
    font-family: "DejaVu Sans", sans-serif;
    font-size: 8px;
    line-height: 13px;
    letter-spacing: -1px;
    background: #3c3c3c;
    color: #ccc;
}

.float-head b {
    font-size: 12px;
    line-height: 12px;
    letter-spacing: 0;
}

.float-panel .tabs {
    height: 18px;
}

.prop-tab.active {
    width: 60px;
    height: 18px;
    font-weight: 400;
    font-size: 10px;
    color: #cfcfcf;
}

.float-main {
    flex: 1;
    min-height: 0;
    display: flex;
    align-items: flex-start;
}

.float-content {
    width: 269px;
    flex: none;
}

.float-scroll {
    width: 15px;
    height: 317px;
    flex: none;
    background: #474747;
}

.prop-title {
    height: 35px;
    display: flex;
    align-items: center;
    padding-left: 9px;
    border-bottom: 1px solid #6a6a6a;
    box-shadow: 0 1px 0 #3e3e3e inset;
}

.prop-title b {
    margin-left: 10px;
    font-size: 10.300px;
    letter-spacing: .1px;
    color: #d8d8d8;
}

.prop-mode {
    width: 22px;
    height: 22px;
    display: flex;
    align-items: center;
    justify-content: center;
    background: #3a3a3a;
    border-radius: 2px;
}

.prop-mask {
    width: 18px;
    height: 14px;
    margin-left: 4px;
    display: flex;
    align-items: center;
    justify-content: center;
    background: linear-gradient(#d4d4d4, #a8a8a8);
}

.prop-mask i {
    width: 7px;
    height: 7px;
    border-radius: 50%;
    background: #333;
}

.prop-size {
    height: 65px;
    padding: 12px 0 0 9px;
    display: grid;
    grid-template-columns: 20px 76px 36px 18px 76px;
    grid-auto-rows: 19px;
    row-gap: 9px;
    align-items: center;
    border-bottom: 1px solid #6a6a6a;
}

.prop-style {
    height: 55px;
    padding: 6px 0 0 9px;
    border-bottom: 1px solid #6a6a6a;
}

.style-row {
    display: flex;
    align-items: center;
}

.style-row.second {
    margin-top: 6px;
}

.mini-ic {
    flex: none;
}

.ic-indent {
    margin-left: 2px;
}

.prop-corners {
    height: 112px;
    padding: 5px 0 0 8px;
    border-bottom: 1px solid #6a6a6a;
}

.all-corners {
    width: 227px;
}

.corner-row {
    display: grid;
    grid-template-columns: 18px 86px 86px 16px;
    column-gap: 6px;
    align-items: center;
    margin-top: 7px;
}

.corner-row .corner {
    width: 14px;
    height: 14px;
    margin-left: 2px;
    border: 1px solid #aaa;
}

.corner.tl { border-top-left-radius: 4px; }
.corner.tr { border-top-right-radius: 4px; }
.corner.bl { border-bottom-left-radius: 4px; }
.corner.br { border-bottom-right-radius: 4px; }

.corner-link {
    width: 24px;
    height: 25px;
    margin: 6px 0 -1px 101px;
    display: flex;
    align-items: center;
    justify-content: center;
    background: #3a3a3a;
    border-radius: 2px;
}

.corner-link + .corner-row {
    margin-top: 6px;
}

.prop-ops {
    display: flex;
    width: 133px;
    height: 20px;
    margin: 6px 0 0 55px;
    border: 1px solid #333;
    border-radius: 2px;
}

.op {
    flex: 1;
    display: flex;
    align-items: center;
    justify-content: center;
    color: #cfcfcf;
    background: linear-gradient(#6e6e6e, #5c5c5c);
    border-right: 1px solid #333;
}

.op:last-child {
    border-right: 0;
}

.op.active {
    background: #3a3a3a;
}

.float-foot {
    position: relative;
    height: 7px;
    flex: none;
    border-top: 1px solid #333;
}
```
